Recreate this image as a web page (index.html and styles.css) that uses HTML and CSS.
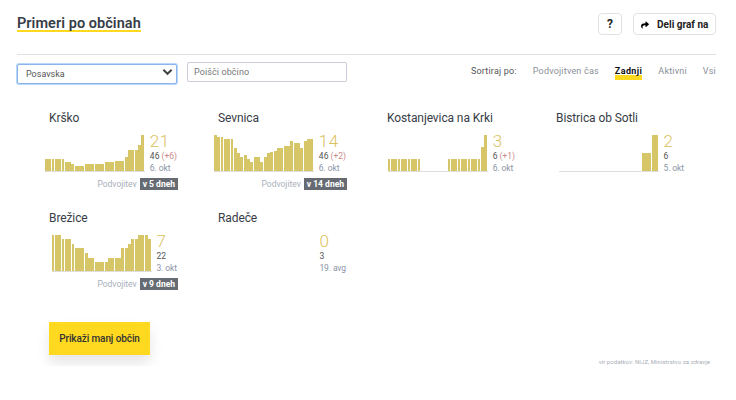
FILE: index.html
```html
<!DOCTYPE html>
<html lang="sl">
<head>
  <meta charset="UTF-8" />
  <meta name="viewport" content="width=device-width, initial-scale=1.0"/>
  <title>Primeri po občinah</title>
  <link rel="stylesheet" href="styles.css">
</head>
<body>

  <header class="top">
    <h1><span>Primeri po občinah</span></h1>
    <div class="top-buttons">
      <button class="btn-light btn-help">?</button>
      <button class="btn-light btn-share">
        <svg viewBox="0 0 512 512" width="8" height="8"><path d="M503.691 189.836L327.687 37.851C312.281 24.546 288 35.347 288 56.015v80.053C127.371 137.907 0 170.1 0 322.326c0 61.441 39.581 122.309 83.333 154.132 13.653 9.931 33.111-2.533 28.077-18.631C66.066 312.814 132.917 274.316 288 272.085V360c0 20.7 24.3 31.453 39.687 18.164l176.004-152c11.071-9.562 11.086-26.753 0-36.328z"/></svg>
        Deli graf na
      </button>
    </div>
  </header>

  <div class="filters">
    <div class="select-wrap">
      <select class="region">
        <option>Posavska</option>
      </select>
      <svg class="chevron" viewBox="0 0 12 8" width="11" height="8"><polyline points="1.5,1.5 6,6 10.5,1.5" /></svg>
    </div>
    <input class="search" type="text" placeholder="Poišči občino" />
    <div class="sort">
      <span class="sort-label">Sortiraj po:</span>
      <a>Podvojitven čas</a>
      <a class="active">Zadnji</a>
      <a>Aktivni</a>
      <a>Vsi</a>
    </div>
  </div>

  <div id="cards" class="cards"></div>

  <button class="btn-more">Prikaži manj občin</button>
  <p class="source">vir podatkov: NIJZ, Ministrstvo za zdravje</p>

  <script src="script.js"></script>
</body>
</html>
```

FILE: styles.css
```css
body {
  font-family: Roboto, "Liberation Sans", sans-serif;
  margin: 0;
  padding: 0 20px 0 17px;
  background: #fff;
  color: #373d47;
}

.top {
  display: flex;
  justify-content: space-between;
  height: 54px;
  border-bottom: 1px solid #e0e0e5;
}

h1 {
  margin: 16px 0 0;
  font-size: 14.5px;
  line-height: 16px;
  font-weight: 600;
  letter-spacing: 0.05px;
}

h1 span {
  display: inline-block;
  height: 14px;
  border-bottom: 2px solid #ffd920;
}

.top-buttons {
  display: flex;
  gap: 11px;
  margin-top: 13px;
}

.btn-light {
  height: 22px;
  padding: 0;
  background: #fff;
  border: 1px solid #e2e2e2;
  border-radius: 4px;
  font-family: inherit;
  font-size: 10px;
  font-weight: 700;
  color: #222;
}

.btn-help {
  width: 24px;
  font-size: 12px;
}

.btn-share {
  width: 83px;
}

.btn-share svg {
  margin-right: 6px;
  vertical-align: -1px;
}

.filters {
  display: flex;
  align-items: flex-start;
  margin-top: 7px;
  height: 21px;
}

.select-wrap {
  position: relative;
  width: 160px;
  height: 20px;
  margin-right: 10px;
}

.region {
  appearance: none;
  width: 100%;
  height: 100%;
  padding: 0 8px;
  background: #fff;
  border: 1px solid #8ab4ea;
  border-radius: 2px;
  box-shadow: 0 0 0 1px #b9d7fb;
  font-family: inherit;
  font-size: 9px;
  color: #555;
}

.chevron {
  position: absolute;
  top: 6px;
  right: 4px;
}

.chevron polyline {
  fill: none;
  stroke: #444;
  stroke-width: 2.2;
}

.search {
  box-sizing: border-box;
  width: 160px;
  height: 20px;
  padding: 0 6px;
  border: 1px solid #ccd;
  border-radius: 2px;
  font-family: inherit;
  font-size: 9px;
  letter-spacing: 0.1px;
}

.search::placeholder {
  color: #777;
}

.sort {
  display: flex;
  gap: 16px;
  margin: 1px 0 0 auto;
  font-size: 9px;
  line-height: 16px;
  letter-spacing: 0.2px;
  color: #8a8f98;
}

.sort-label {
  color: #555;
}

.sort a {
  height: 17px;
}

.sort .active {
  font-weight: 700;
  letter-spacing: 0.4px;
  color: #111;
  background: linear-gradient(#fff 12px, #ffd920 12px);
}

.cards {
  display: grid;
  grid-template-columns: repeat(4, 169px);
  row-gap: 20px;
  margin: 27px 0 0 15px;
}

.card {
  padding: 0 24px 0 17px;
  min-width: 0;
}

.card-name {
  height: 16px;
  margin-bottom: 9px;
  font-size: 12px;
  line-height: 16px;
  letter-spacing: -0.1px;
  white-space: nowrap;
}

.card-row {
  display: flex;
  justify-content: flex-end;
  height: 43px;
}

.chart {
  display: flex;
  align-items: flex-end;
  flex: none;
  width: 100px;
  height: 36px;
  margin-right: 5px;
  border-bottom: 1px solid #ddd;
}

.bar {
  flex: 1;
  margin-right: 0.5px;
  background: #d6c668;
}

.stats {
  flex: none;
  font-size: 8.5px;
  line-height: 12px;
  white-space: nowrap;
  color: #555;
}

.stats-count {
  height: 12px;
  margin-bottom: 3px;
  font-size: 17px;
  font-weight: 300;
  color: #dcc25f;
  letter-spacing: 0.5px;
}

.stats-new {
  color: #c98a8a;
}

.stats-date {
  letter-spacing: -0.1px;
  color: #8a94a6;
}

.doubling {
  display: flex;
  justify-content: flex-end;
  align-items: center;
  gap: 3px;
  margin-right: -1px;
  font-size: 8.5px;
  color: #a9b0bb;
}

.doubling b {
  height: 12px;
  padding: 0 3px;
  line-height: 12px;
  background: #666b73;
  color: #fff;
}

.btn-more {
  display: block;
  width: 101px;
  height: 33px;
  margin: 32px 0 0 32px;
  padding: 0;
  border: 0;
  background: #ffd920;
  box-shadow: 0 8px 14px rgba(0,0,0,0.1);
  font-family: inherit;
  font-size: 10px;
  font-weight: 500;
  letter-spacing: -0.1px;
  color: #333;
}

.source {
  margin: 3px 6px 0 0;
  font-size: 6px;
  line-height: 8px;
  letter-spacing: 0.05px;
  text-align: right;
  color: #a9aeb8;
}
```

FILE: script.js
```js
// visine stolpcev v px (36 = najvec)
const repeat = (h, n) => Array(n).fill(h);

const towns = [
  {
    name: 'Krško', count: 21, total: 46, added: 6, date: '6. okt', days: 5,
    bars: [...repeat(12, 6), 9, 9, 7, ...repeat(5, 3), ...repeat(7, 6), ...repeat(9, 3), ...repeat(10, 3), 14, ...repeat(21, 3), 26, 36]
  },
  {
    name: 'Sevnica', count: 14, total: 46, added: 2, date: '6. okt', days: 14,
    bars: [36, 34, 34, 32, 32, 32, 23, 18, 14, 16, 12, 9, 14, 14, 9, 14, 18, 19, 20, 23, 23, 25, 25, 30, 28, 28, 23, 30, 32, 32]
  },
  {
    name: 'Kostanjevica na Krki', count: 3, total: 6, added: 1, date: '6. okt',
    bars: [...repeat(12, 10), ...repeat(0, 8), ...repeat(12, 10), 24, 36]
  },
  {
    name: 'Bistrica ob Sotli', count: 2, total: 6, date: '5. okt',
    bars: [...repeat(0, 25), 18, 18, 18, 36, 36]
  },
  {
    name: 'Brežice', count: 7, total: 22, date: '3. okt', days: 9,
    bars: [36, 36, 36, 32, 32, 32, 27, 23, 23, 23, 18, 13, 13, 9, 9, 9, 9, 13, 13, 13, 13, 23, 23, 27, 32, 32, 36, 36, 36, 32]
  },
  { name: 'Radeče', count: 0, total: 3, date: '19. avg' }
];

const cards = document.getElementById('cards');

towns.forEach(t => {
  const chart = t.bars
    ? `<div class="chart">${t.bars.map(h => `<div class="bar" style="height:${h}px"></div>`).join('')}</div>`
    : '';
  const added = t.added ? ` <span class="stats-new">(+${t.added})</span>` : '';
  const doubling = t.days
    ? `<div class="doubling">Podvojitev <b>v ${t.days} dneh</b></div>`
    : '';

  const card = document.createElement('div');
  card.className = 'card';
  card.innerHTML = `
    <div class="card-name">${t.name}</div>
    <div class="card-row">
      ${chart}
      <div class="stats">
        <div class="stats-count">${t.count}</div>
        <div>${t.total}${added}</div>
        <div class="stats-date">${t.date}</div>
      </div>
    </div>
    ${doubling}`;
  cards.appendChild(card);
});
```
